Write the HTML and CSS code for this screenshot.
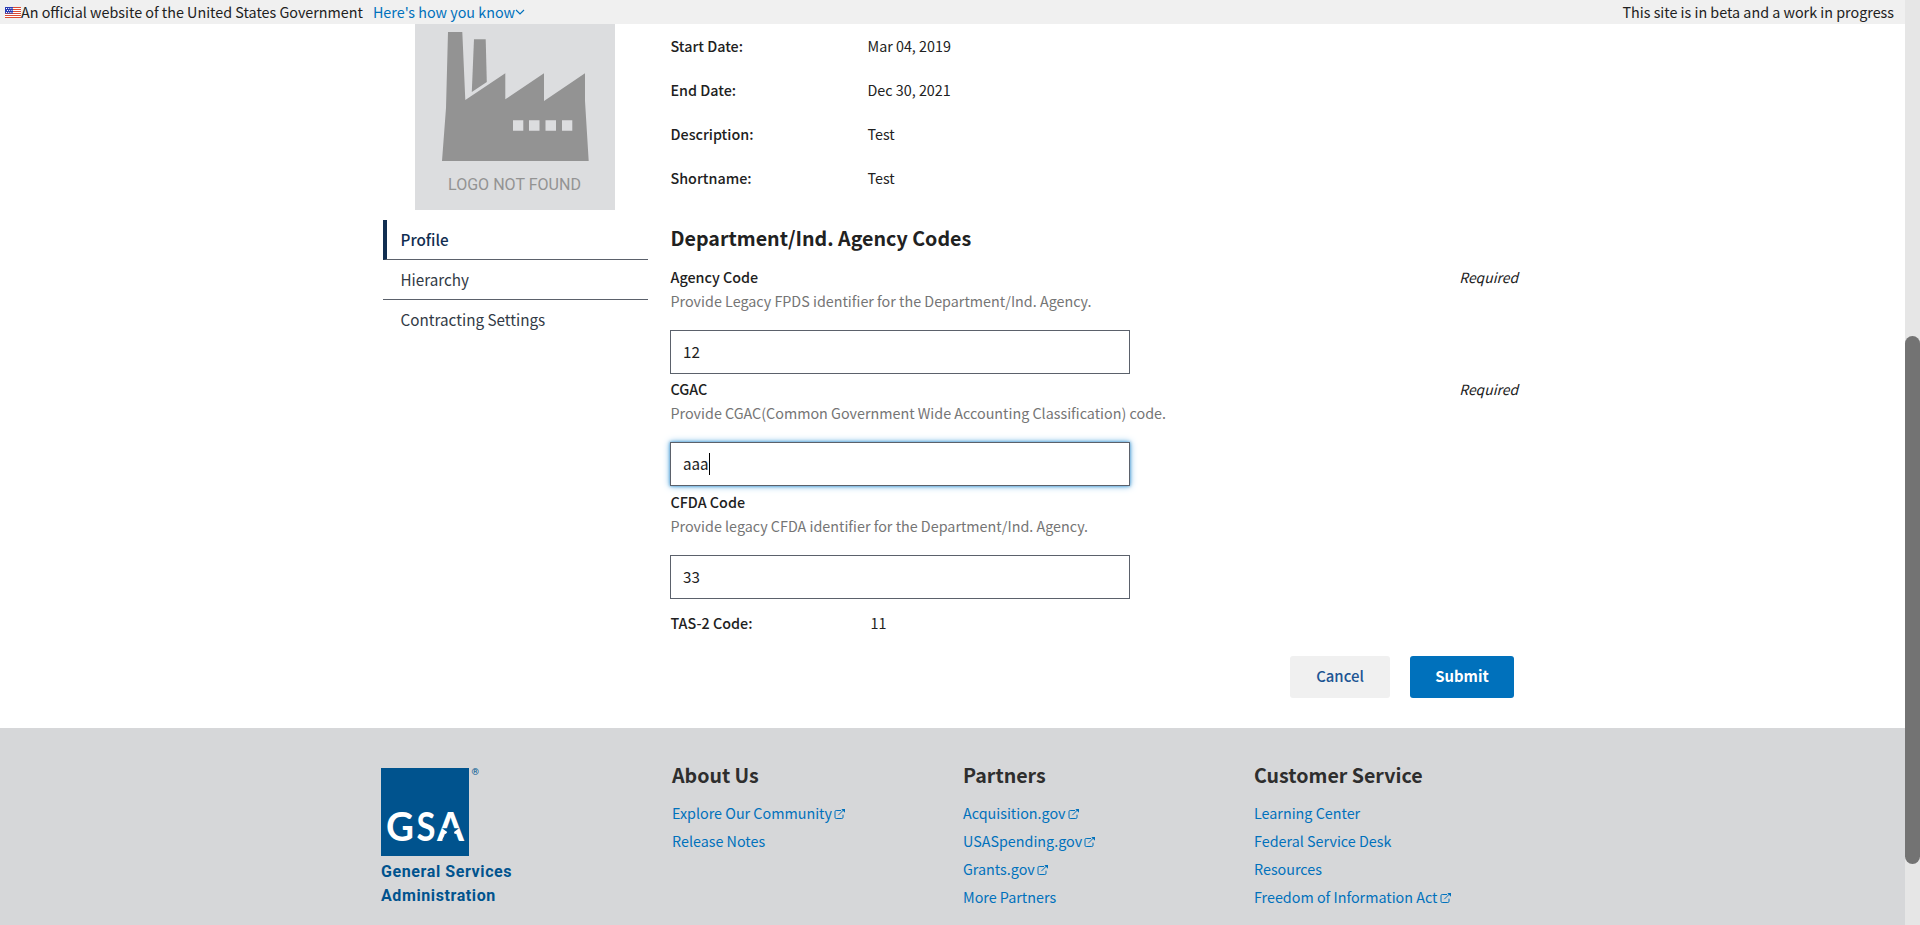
FILE: index.html
```html
<!DOCTYPE html>
<html lang="en">
<head>
<meta charset="utf-8">
<title>Department Profile</title>
<link rel="stylesheet" href="styles.css">
</head>
<body>
<svg class="defs" width="0" height="0" aria-hidden="true">
  <symbol id="external" viewBox="0 0 12 12">
    <path d="M7 2.5H2.2Q1 2.5 1 3.700V9.300Q1 10.500 2.200 10.500H7.800Q9 10.500 9 9.300V6.700M4.300 7.200L9.800 1.700" fill="none" stroke="currentColor" stroke-width="1"/>
    <path d="M7.300 1H11V4.700Z" fill="currentColor"/>
  </symbol>
</svg>
<div class="window">
  <div class="page">
    <header class="banner">
      <svg class="flag" viewBox="0 0 16 11" width="16" height="11">
        <rect width="16" height="11" fill="#fff"/>
        <path d="M0 .5H16M0 2.500H16M0 4.500H16M0 6.500H16M0 8.500H16M0 10.500H16" stroke="#dc4a32" stroke-width="1"/>
        <rect width="8" height="6.500" fill="#2a3cb4"/>
        <path d="M1 1.500H8M2 3.500H8M1 5.500H8" stroke="#fff" stroke-width="1" stroke-dasharray="1 1.200"/>
      </svg>
      <span class="official">An official website of the United States Government</span>
      <a class="know">Here's how you know</a>
      <svg class="caret-down" viewBox="0 0 10 6" width="10" height="6"><path d="M1 1L5 5L9 1" fill="none" stroke="currentColor" stroke-width="1.200"/></svg>
      <span class="beta">This site is in beta and a work in progress</span>
    </header>
    <main class="main">
      <aside class="side">
        <svg class="placeholder" viewBox="0 14 200 186" width="200" height="186">
          <rect width="200" height="200" fill="#dcdddf"/>
          <path fill="#939393" fill-rule="evenodd" d="M33 22H47.300L50.300 90L90.300 63.300V89.300L129 63.300V91L170 63.300V91L173.700 151H27L31 98ZM98 110.300V120.700H108.300V110.300ZM114 110.300V120.700H124.500V110.300ZM130.500 110.300V120.700H141V110.300ZM147 110.300V120.700H157.300V110.300Z"/>
          <path fill="#939393" d="M59 29.300H70.700L71.800 72L56.800 82Z"/>
          <text x="33" y="179.500" class="placeholder-text" textLength="133" lengthAdjust="spacingAndGlyphs">LOGO NOT FOUND</text>
        </svg>
        <nav class="nav">
          <a class="nav-item current">Profile</a>
          <a class="nav-item">Hierarchy</a>
          <a class="nav-item">Contracting Settings</a>
        </nav>
      </aside>
      <section class="content">
        <dl class="details">
          <div class="row"><dt>Start Date:</dt><dd>Mar 04, 2019</dd></div>
          <div class="row"><dt>End Date:</dt><dd>Dec 30, 2021</dd></div>
          <div class="row"><dt>Description:</dt><dd>Test</dd></div>
          <div class="row"><dt>Shortname:</dt><dd>Test</dd></div>
        </dl>
        <h2 class="title">Department/Ind. Agency Codes</h2>
        <div class="group">
          <div class="label"><span>Agency Code</span><em>Required</em></div>
          <p class="hint">Provide Legacy FPDS identifier for the Department/Ind. Agency.</p>
          <div class="input">12</div>
        </div>
        <div class="group">
          <div class="label"><span>CGAC</span><em>Required</em></div>
          <p class="hint">Provide CGAC(Common Government Wide Accounting Classification) code.</p>
          <div class="input focused">aaa<i class="cursor"></i></div>
        </div>
        <div class="group last">
          <div class="label"><span>CFDA Code</span></div>
          <p class="hint">Provide legacy CFDA identifier for the Department/Ind. Agency.</p>
          <div class="input">33</div>
        </div>
        <div class="row tas"><span class="key">TAS-2 Code:</span><span class="tas-value">11</span></div>
        <div class="actions">
          <a class="button cancel">Cancel</a>
          <a class="button submit">Submit</a>
        </div>
      </section>
    </main>
    <footer class="footer">
      <div class="gsa">
        <div class="gsa-mark">
          <svg viewBox="0 0 100 88" width="100" height="88">
            <rect width="88" height="88" fill="#00538e"/>
            <g class="gsa-text"><text x="5" y="73" textLength="28" lengthAdjust="spacingAndGlyphs">G</text><text x="35.500" y="73" textLength="19" lengthAdjust="spacingAndGlyphs">S</text><text x="56" y="73" textLength="27" lengthAdjust="spacingAndGlyphs">A</text></g>
            <path fill="#00538e" d="M69.500 54.500L71.500 60.300H78L73 64L75 70.500L69.700 66.500L61 72L66.200 64L61 60.300H67.500Z"/>
          </svg>
          <span class="reg">®</span>
        </div>
        <div class="gsa-name"><span>General Services</span><span class="second">Administration</span></div>
      </div>
      <div class="column">
        <h3>About Us</h3>
        <a>Explore Our Community<svg class="ext"><use href="#external"/></svg></a>
        <a>Release Notes</a>
      </div>
      <div class="column">
        <h3>Partners</h3>
        <a>Acquisition.gov<svg class="ext"><use href="#external"/></svg></a>
        <a>USASpending.gov<svg class="ext"><use href="#external"/></svg></a>
        <a>Grants.gov<svg class="ext"><use href="#external"/></svg></a>
        <a>More Partners</a>
      </div>
      <div class="column">
        <h3>Customer Service</h3>
        <a>Learning Center</a>
        <a>Federal Service Desk</a>
        <a>Resources</a>
        <a>Freedom of Information Act<svg class="ext"><use href="#external"/></svg></a>
      </div>
    </footer>
  </div>
  <div class="track"><div class="thumb"></div></div>
</div>
</body>
</html>
```
FILE: styles.css
```css
* { box-sizing: border-box; }
html, body { margin: 0; height: 925px; overflow: hidden; }
body {
  font-family: "Noto Sans CJK SC", "Noto Sans", sans-serif;
  font-size: 14.330px;
  line-height: 24px;
  color: #212121;
  background: #fff;
}
h2, h3, p, dl, dd { margin: 0; }
a { color: #0071bc; }
.defs { display: block; width: 0; height: 0; }
.window { display: flex; height: 925px; }
.page { width: 1905px; display: flex; flex-direction: column; }

.banner {
  display: flex;
  align-items: center;
  height: 24px;
  padding: 0 11px 0 5px;
  background: #f0f0f0;
}
.banner span, .banner a { white-space: nowrap; }
.know { margin-left: 10px; }
.caret-down { color: #0071bc; }
.beta { margin-left: auto; }

.main { display: flex; height: 704px; padding-left: 383px; }
.side { width: 265px; margin-right: 22px; }
.placeholder { display: block; margin-left: 32px; }
.placeholder-text { font: 17px Roboto, sans-serif; fill: #939393; }
.nav { display: flex; flex-direction: column; margin-top: 10px; }
.nav-item {
  height: 40px;
  padding: 7px 0 0 17.500px;
  line-height: 24px;
  font-size: 15.250px;
  color: #323a45;
  border-bottom: 1px solid #5b616b;
}
.nav-item:last-child { border-bottom: 0; }
.current { padding-left: 13.500px; border-left: 4px solid #112e51; color: #112e51; font-weight: 500; }

.content { width: 850px; }
.row { display: flex; height: 44px; line-height: 44px; padding-left: .5px; }
.row dt, .key { width: 197px; font-weight: 500; }
.title { margin: 22px 0 10px .5px; font-size: 19.650px; line-height: 32px; font-weight: 700; }
.group { padding-top: 1px; margin-bottom: 2px; }
.group + .last { margin-top: 3px; }
.label { display: flex; justify-content: space-between; padding: 0 2px 0 .5px; font-weight: 500; }
.label em { font-weight: 400; font-size: 13.900px; }
.hint { padding-left: .5px; color: #757575; white-space: nowrap; }
.input {
  display: flex;
  align-items: center;
  width: 460px;
  height: 44px;
  margin-top: 17px;
  padding: 0 0 3px 12px;
  border: 1px solid #5b616b;
  font-size: 15.200px;
}
.focused { box-shadow: 0 0 3px #3e94cf, 0 0 7px #70b5e3; }
.cursor { width: 1px; height: 22px; margin-top: 2px; background: #000; }
.tas { height: 24px; line-height: 24px; margin-top: 12px; }
.tas .key { width: 200px; }
.actions { display: flex; justify-content: flex-end; gap: 20px; padding-right: 6px; margin-top: 21px; }
.button { height: 42px; line-height: 40px; border-radius: 3px; text-align: center; font-size: 14.900px; }
.cancel { width: 100px; background: #f0f0f0; color: #205493; font-weight: 500; }
.submit { width: 104px; background: #0071bc; color: #fff; font-weight: 700; }

.footer { display: flex; height: 197px; padding: 40px 0 0 381px; background: #d6d7d9; overflow: hidden; }
.gsa, .column { width: 291px; }
.gsa-mark { display: flex; height: 88px; }
.gsa-mark svg { display: block; }
.gsa-text { font: 700 41px Lato, sans-serif; fill: #fff; }
.reg { margin-left: -9.500px; font: 9.500px/8px Roboto, sans-serif; color: #00538e; }
.gsa-name { display: flex; flex-direction: column; margin-top: 4px; font: 700 16px/24px Roboto, sans-serif; letter-spacing: 0.600px; color: #00538e; }
.column { display: flex; flex-direction: column; line-height: 28px; }
.column h3 { margin: -9px 0 8px; font-size: 19.600px; line-height: 32px; font-weight: 700; color: #2e2e2e; }
.column a { height: 28px; white-space: nowrap; }
.ext { width: 12px; height: 12px; margin-left: 2px; vertical-align: -1px; }

.track { width: 15px; background: #e6e6e6; }
.thumb { height: 528px; margin-top: 336px; border-radius: 8px; background: #737373; }
```
